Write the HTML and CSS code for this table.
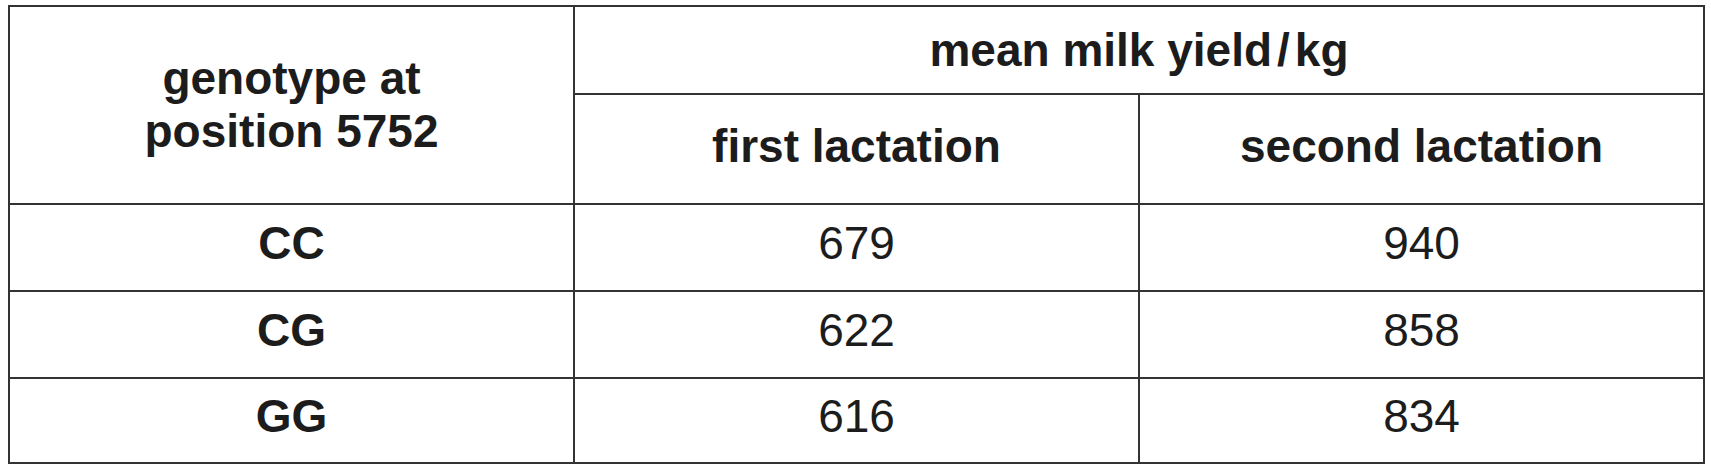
FILE: index.html
```html
<!DOCTYPE html>
<html lang="en">
<head>
<meta charset="utf-8">
<title>Mean milk yield by genotype</title>
<link rel="stylesheet" href="styles.css">
</head>
<body>
<table class="data">
  <thead>
    <tr class="r1">
      <th class="gen" rowspan="2">genotype at<br>position 5752</th>
      <th colspan="2">mean milk yield<span class="slash">/</span>kg</th>
    </tr>
    <tr class="r2">
      <th class="sub">first lactation</th>
      <th class="sub">second lactation</th>
    </tr>
  </thead>
  <tbody>
    <tr class="r3"><th>CC</th><td>679</td><td>940</td></tr>
    <tr class="r4"><th>CG</th><td>622</td><td>858</td></tr>
    <tr class="r5"><th>GG</th><td>616</td><td>834</td></tr>
  </tbody>
</table>
</body>
</html>
```

FILE: styles.css
```css
html, body {
  margin: 0;
  padding: 0;
  background: #ffffff;
}

body {
  padding: 5px 6px 0 8px;
  font-family: "Liberation Sans", Arial, sans-serif;
  color: #1c1c1c;
}

.data {
  border-collapse: collapse;
  width: 1697px;
  table-layout: fixed;
  border: 2px solid #6a6a6a;
}

.data th,
.data td {
  border: 2px solid #333333;
  text-align: center;
  vertical-align: middle;
  padding: 0;
  font-size: 46px;
  line-height: 53px;
  letter-spacing: 0;
}

.data th {
  font-weight: bold;
}

.data td {
  font-weight: normal;
}

.data .gen {
  width: 563px;
}

.data .sub {
  padding-bottom: 5px;
}

.data tbody th,
.data tbody td {
  padding-bottom: 9px;
}

.slash {
  margin: 0 5px;
  font-weight: bold;
}

.r1 { height: 88px; }
.r2 { height: 110px; }
.r3 { height: 87px; }
.r4 { height: 87px; }
.r5 { height: 85px; }
```
